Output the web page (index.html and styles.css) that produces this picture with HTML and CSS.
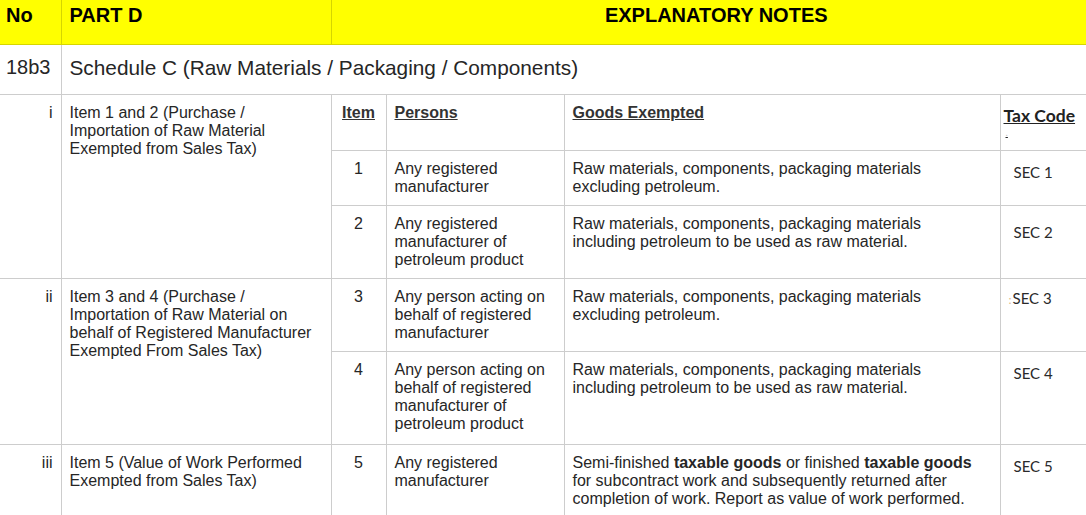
FILE: index.html
```html
<!DOCTYPE html>
<html lang="en">
<head>
<meta charset="utf-8">
<title>Part D Explanatory Notes</title>
<link rel="stylesheet" href="styles.css">
</head>
<body>
<table class="notes">
  <colgroup>
    <col class="c-no"><col class="c-part"><col class="c-item"><col class="c-persons"><col class="c-goods"><col class="c-tax">
  </colgroup>
  <thead>
    <tr class="head">
      <th class="h-no">No</th>
      <th class="h-part">PART D</th>
      <th class="h-notes" colspan="4">EXPLANATORY NOTES</th>
    </tr>
  </thead>
  <tbody>
    <tr class="schedule">
      <td class="sched-no">18b3</td>
      <td class="sched-title" colspan="5">Schedule C (Raw Materials / Packaging / Components)</td>
    </tr>

    <tr class="sub-head">
      <td class="num" rowspan="3">i</td>
      <td class="desc" rowspan="3">Item 1 and 2 (Purchase / Importation of Raw Material Exempted from Sales Tax)</td>
      <th class="col-item">Item</th>
      <th class="col-label">Persons</th>
      <th class="col-label">Goods Exempted</th>
      <th class="col-tax">Tax Code<span class="dot">.</span></th>
    </tr>
    <tr>
      <td class="item">1</td>
      <td class="persons">Any registered manufacturer</td>
      <td class="goods">Raw materials, components, packaging materials excluding petroleum.</td>
      <td class="sec">SEC 1</td>
    </tr>
    <tr>
      <td class="item">2</td>
      <td class="persons">Any registered manufacturer of petroleum product</td>
      <td class="goods">Raw materials, components, packaging materials including petroleum to be used as raw material.</td>
      <td class="sec sec-low">SEC 2</td>
    </tr>

    <tr>
      <td class="num" rowspan="2">ii</td>
      <td class="desc" rowspan="2">Item 3 and 4 (Purchase / Importation of Raw Material on behalf of Registered Manufacturer Exempted From Sales Tax)</td>
      <td class="item">3</td>
      <td class="persons">Any person acting on behalf of registered manufacturer</td>
      <td class="goods">Raw materials, components, packaging materials excluding petroleum.</td>
      <td class="sec sec-high"><span class="mark">:</span>SEC 3</td>
    </tr>
    <tr class="tall">
      <td class="item">4</td>
      <td class="persons">Any person acting on behalf of registered manufacturer of petroleum product</td>
      <td class="goods">Raw materials, components, packaging materials including petroleum to be used as raw material.</td>
      <td class="sec">SEC 4</td>
    </tr>

    <tr>
      <td class="num">iii</td>
      <td class="desc">Item 5 (Value of Work Performed Exempted from Sales Tax)</td>
      <td class="item">5</td>
      <td class="persons">Any registered manufacturer</td>
      <td class="goods">Semi-finished <b>taxable goods</b> or finished <b>taxable goods</b> for subcontract work and subsequently returned after completion of work. Report as value of work performed.</td>
      <td class="sec">SEC 5</td>
    </tr>
  </tbody>
</table>
</body>
</html>
```

FILE: styles.css
```css
html, body {
  margin: 0;
  padding: 0;
  overflow: hidden;
  background: #ffffff;
}

body {
  font-family: "Liberation Sans", Arial, sans-serif;
  color: #262626;
}

.notes {
  border-collapse: collapse;
  border-style: hidden;
  table-layout: fixed;
  width: 1101px;
}

.c-no { width: 61px; }
.c-part { width: 270px; }
.c-item { width: 55px; }
.c-persons { width: 178px; }
.c-goods { width: 436px; }
.c-tax { width: 101px; }

.notes td,
.notes th {
  border: 1px solid #cdcdcd;
  padding: 9px 8px;
  vertical-align: top;
  text-align: left;
  font-weight: normal;
  font-size: 16px;
  line-height: 18px;
}

/* yellow header */
.head { height: 44px; }

.notes .head th {
  background: #ffff00;
  color: #000000;
  font-weight: bold;
  font-size: 20px;
  line-height: 23px;
  padding: 4px 8px 0;
  border-color: #d6d600;
}

.notes .head .h-no { padding-left: 6px; }

.notes .head .h-notes { text-align: center; }

/* schedule row */
.schedule { height: 50px; }

.notes .schedule td {
  font-size: 20px;
  line-height: 23px;
  padding: 11px 8px 0;
}

.notes .schedule .sched-no { padding-left: 6px; }

.notes .schedule .sched-title { font-size: 20.8px; }

/* numbering column */
.notes .num {
  text-align: right;
  padding-right: 8px;
}

/* inner column headings */
.sub-head { height: 56px; }

.notes .sub-head th {
  font-weight: bold;
  text-decoration: underline;
  color: #333333;
}

.notes .sub-head .col-item { text-align: center; padding-left: 0; padding-right: 0; }

.notes .sub-head .col-tax {
  font-family: Lato, "Liberation Sans", sans-serif;
  font-size: 17.5px;
  line-height: 20px;
  padding: 11px 0 0 3px;
  color: #222222;
}

.dot {
  display: block;
  font-size: 10px;
  line-height: 12px;
  font-weight: normal;
  color: #c4c4c4;
  padding-left: 2px;
  text-decoration: none;
}

.notes .tall td { padding-bottom: 11px; }

.notes .item {
  text-align: center;
  padding-left: 0;
  padding-right: 0;
}

.notes .goods {
  padding-right: 20px;
}

.notes .sec {
  font-family: Lato, "Liberation Sans", sans-serif;
  font-size: 15px;
  padding: 12px 0 0 13px;
  color: #2a2a2a;
}

.notes .sec-low { padding-top: 17px; }
.notes .sec-high { padding-top: 10px; padding-left: 8px; }

.mark {
  color: #d9b98a;
  font-size: 12px;
  padding-right: 1px;
}
```
